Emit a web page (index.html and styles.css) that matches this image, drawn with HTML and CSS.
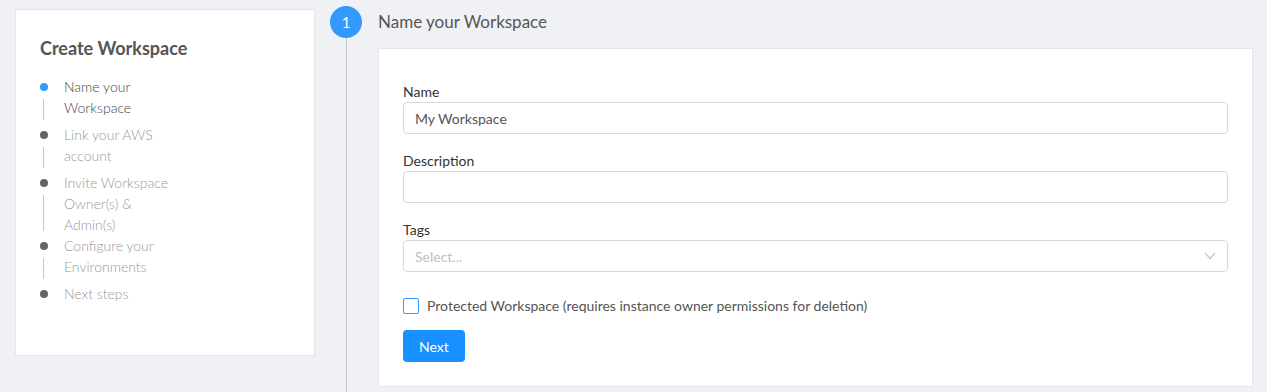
FILE: index.html
```html
<!DOCTYPE html>
<html lang="en">
<head>
<meta charset="UTF-8">
<meta name="viewport" content="width=device-width, initial-scale=1.0">
<title>Create Workspace</title>
<link rel="stylesheet" href="styles.css">
</head>
<body>

<div class="sidebar">
  <h2 class="sidebar-title">Create Workspace</h2>
  <ul class="steps">
    <li class="step active"><span class="step-text">Name your Workspace</span></li>
    <li class="step"><span class="step-text">Link your AWS account</span></li>
    <li class="step"><span class="step-text">Invite Workspace Owner(s) &amp; Admin(s)</span></li>
    <li class="step"><span class="step-text">Configure your Environments</span></li>
    <li class="step last"><span class="step-text">Next steps</span></li>
  </ul>
</div>

<div class="wizard">
  <div class="wizard-rail">
    <div class="wizard-num">1</div>
    <div class="wizard-line"></div>
  </div>
  <div class="wizard-body">
    <h1 class="wizard-title">Name your Workspace</h1>
    <div class="form-card">
      <div class="field">
        <label class="field-label">Name</label>
        <input class="text-input" type="text" value="My Workspace">
      </div>
      <div class="field">
        <label class="field-label">Description</label>
        <input class="text-input" type="text">
      </div>
      <div class="field">
        <label class="field-label">Tags</label>
        <div class="select-input">
          <span class="placeholder">Select...</span>
          <svg class="chevron" width="12" height="8" viewBox="0 0 12 8"><path d="M1 1 L6 6.5 L11 1" fill="none" stroke="#c4c4c4" stroke-width="1.2"/></svg>
        </div>
      </div>
      <label class="check-row">
        <span class="checkbox"></span>
        <span>Protected Workspace (requires instance owner permissions for deletion)</span>
      </label>
      <button class="next-button">Next</button>
    </div>
  </div>
</div>

</body>
</html>
```

FILE: styles.css
```css
body {
  font-family: Lato, "Liberation Sans", sans-serif;
  background-color: #f0f1f5;
  margin: 0;
  padding: 6px 14px 0 15px;
  display: flex;
  height: 392px;
  box-sizing: border-box;
  overflow: hidden;
}

.sidebar {
  width: 300px;
  height: 347px;
  margin-top: 3px;
  box-sizing: border-box;
  background-color: #fff;
  border: 1px solid #e4e5e8;
  padding: 27px 24px 0 24px;
  flex-shrink: 0;
}

.sidebar-title {
  font-size: 18px;
  font-weight: 700;
  color: #555;
  margin: 0 0 17px 0;
  line-height: 22px;
}

.steps {
  list-style: none;
  margin: 0;
  padding: 0;
}

.step {
  position: relative;
  min-height: 48px;
  padding-left: 24px;
  font-size: 14px;
  font-weight: 300;
  line-height: 21px;
  color: #999;
}

.step-text {
  display: block;
  width: 112px;
}

.step::before {
  content: "";
  position: absolute;
  left: 0;
  top: 7px;
  width: 8px;
  height: 8px;
  border-radius: 50%;
  background-color: #666;
}

.step::after {
  content: "";
  position: absolute;
  left: 3px;
  top: 23px;
  bottom: 4px;
  width: 1px;
  background-color: #c8c8c8;
}

.step.last::after {
  display: none;
}

.step.active {
  color: #444;
}

.step.active::before {
  background-color: #3399ff;
}

.wizard {
  display: flex;
  flex: 1;
  margin-left: 15px;
}

.wizard-rail {
  width: 32px;
  display: flex;
  flex-direction: column;
  align-items: center;
  flex-shrink: 0;
}

.wizard-num {
  width: 32px;
  height: 32px;
  border-radius: 50%;
  background-color: #3399ff;
  color: #fff;
  font-size: 15px;
  line-height: 32px;
  text-align: center;
}

.wizard-line {
  flex: 1;
  width: 1px;
  background-color: #c8c8c8;
}

.wizard-body {
  flex: 1;
  margin-left: 16px;
}

.wizard-title {
  font-size: 17px;
  font-weight: 400;
  color: #555;
  margin: 0;
  line-height: 32px;
}

.form-card {
  margin-top: 10px;
  background-color: #fff;
  border: 1px solid #e4e5e8;
  padding: 33px 24px 24px 24px;
}

.field {
  margin-bottom: 17px;
}

.field-label {
  display: block;
  font-size: 14px;
  line-height: 20px;
  color: #333;
}

.text-input,
.select-input {
  display: block;
  width: 100%;
  height: 32px;
  box-sizing: border-box;
  border: 1px solid #d9d9d9;
  border-radius: 4px;
  padding: 0 11px;
  font-family: inherit;
  font-size: 14px;
  color: #555;
  background-color: #fff;
  outline: none;
}

.select-input {
  display: flex;
  align-items: center;
  justify-content: space-between;
}

.placeholder {
  color: #bfbfbf;
}

.check-row {
  display: flex;
  align-items: center;
  margin-top: 25px;
  font-size: 14px;
  color: #555;
}

.checkbox {
  width: 16px;
  height: 16px;
  box-sizing: border-box;
  border: 1px solid #3399ff;
  border-radius: 2px;
  margin-right: 8px;
}

.next-button {
  display: block;
  margin-top: 16px;
  height: 32px;
  padding: 0 16px;
  border: none;
  border-radius: 4px;
  background-color: #1890ff;
  color: #fff;
  font-family: inherit;
  font-size: 14px;
  cursor: pointer;
}
```
